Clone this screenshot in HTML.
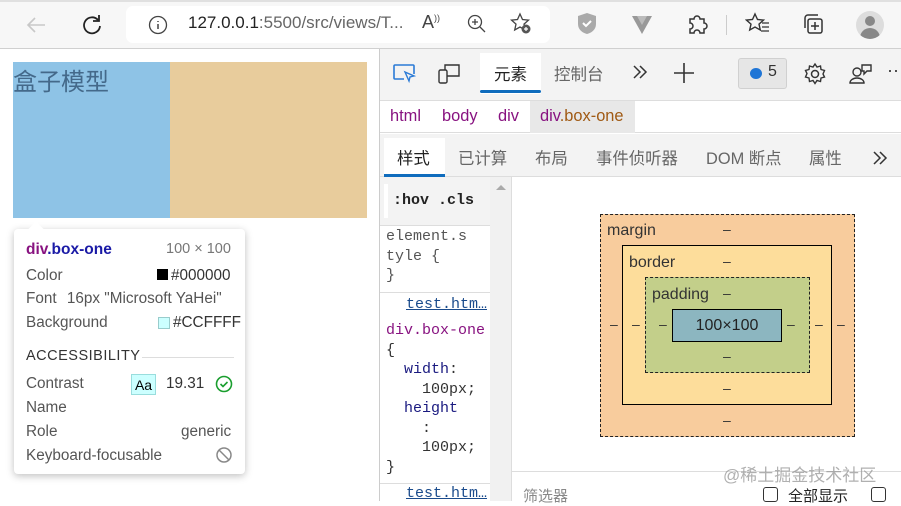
<!DOCTYPE html>
<html><head><meta charset="utf-8"><style>
*{margin:0;padding:0;box-sizing:border-box}
body{width:901px;height:501px;overflow:hidden;position:relative;background:#fff;font-family:"Liberation Sans","Noto Sans CJK SC",sans-serif;color:#333}
.a{position:absolute;white-space:nowrap}
.mono{font-family:"Liberation Mono","Noto Sans CJK SC",monospace}
.tt{font-size:15.3px;color:#555}
.st{font-size:16.4px;color:#666;top:145px}
</style></head><body>
<!-- toolbar -->
<div class="a" style="left:0;top:0;width:901px;height:49px;background:#f7f7f7;border-bottom:1px solid #d0d0d0"></div>
<div class="a" style="left:0;top:0;width:901px;height:2px;background:#e0e0e0"></div>
<svg class="a" style="left:24px;top:14px" width="24" height="22"><path d="M21 11H4M11 4L4 11l7 7" stroke="#c8c8c8" stroke-width="1.6" fill="none"/></svg>
<svg class="a" style="left:80px;top:13px" width="24" height="24"><path d="M18 7A8 8 0 1 0 20 13" stroke="#222" stroke-width="1.8" fill="none"/><path d="M19 2v6h-6" stroke="#222" stroke-width="1.8" fill="none"/></svg>
<div class="a" style="left:126px;top:6px;width:424px;height:37px;background:#fff;border-radius:7px"></div>
<svg class="a" style="left:148px;top:15px" width="20" height="20"><circle cx="10" cy="10" r="8.5" stroke="#444" stroke-width="1.3" fill="none"/><path d="M10 9v5M10 6v1" stroke="#444" stroke-width="1.5"/></svg>
<div class="a" style="left:188px;top:13px;font-size:17px;color:#222">127.0.0.1<span style="color:#666">:5500/src/views/T...</span></div>
<div class="a" style="left:422px;top:12px;font-size:18px;color:#444">A<sup style="font-size:9px">))</sup></div>
<svg class="a" style="left:466px;top:13px" width="22" height="22"><circle cx="9" cy="9" r="6.5" stroke="#444" stroke-width="1.3" fill="none"/><path d="M9 6v6M6 9h6M14 14l5 5" stroke="#444" stroke-width="1.3"/></svg>
<svg class="a" style="left:510px;top:12px" width="24" height="24"><path d="M10 2l2.5 5.5 6 .6-4.5 4 1.3 5.9L10 15l-5.3 3 1.3-5.9-4.5-4 6-.6z" stroke="#444" stroke-width="1.3" fill="none"/><circle cx="16" cy="17" r="4.5" fill="#555"/><path d="M16 15v4M14 17h4" stroke="#fff" stroke-width="1.2"/></svg>
<svg class="a" style="left:576px;top:12px" width="22" height="24"><path d="M11 1l9 3v8c0 6-5 9-9 10-4-1-9-4-9-10V4z" fill="#aaa"/><path d="M7 11l3 3 5-5" stroke="#fff" stroke-width="2" fill="none"/></svg>
<svg class="a" style="left:631px;top:15px" width="22" height="20"><path d="M1 1h20L11 19z" fill="#999"/><path d="M6 1h10l-5 9z" fill="#bbb"/></svg>
<svg class="a" style="left:685px;top:12px" width="24" height="24"><path d="M5 7h4a3 3 0 0 1 6 0h4v4a3 3 0 0 1 0 6v4h-4a3 3 0 0 0-6 0H5v-4a3 3 0 0 0 0-6z" stroke="#333" stroke-width="1.5" fill="none"/></svg>
<div class="a" style="left:726px;top:15px;width:1px;height:20px;background:#ccc"></div>
<svg class="a" style="left:745px;top:12px" width="26" height="24"><path d="M10 2l2.5 5.5 6 .6-4.5 4 1.3 5.9L10 15l-5.3 3 1.3-5.9-4.5-4 6-.6z" stroke="#333" stroke-width="1.4" fill="none"/><path d="M17 11h7M17 15h7M16 19h8" stroke="#333" stroke-width="1.3"/></svg>
<svg class="a" style="left:801px;top:12px" width="24" height="24"><rect x="7" y="7" width="14" height="14" rx="2" stroke="#333" stroke-width="1.5" fill="none"/><path d="M4 16V6a3 3 0 0 1 3-3h10" stroke="#333" stroke-width="1.5" fill="none"/><path d="M14 10v8M10 14h8" stroke="#333" stroke-width="1.5"/></svg>
<div class="a" style="left:856px;top:11px;width:28px;height:28px;border-radius:50%;background:#ddd;overflow:hidden"><div class="a" style="left:9px;top:5px;width:10px;height:10px;border-radius:50%;background:#888"></div><div class="a" style="left:4px;top:17px;width:20px;height:14px;border-radius:10px 10px 0 0;background:#888"></div></div>

<!-- page -->
<div class="a" style="left:13px;top:62px;width:157px;height:156px;background:#8ec3e6"></div>
<div class="a" style="left:170px;top:62px;width:197px;height:156px;background:#e8cc9c"></div>
<div class="a" style="left:13px;top:64px;font-size:24px;color:#44698a;font-family:'Noto Sans CJK SC',sans-serif;line-height:32px">盒子模型</div>

<!-- tooltip -->
<div class="a" style="left:14px;top:229px;width:231px;height:245px;background:#fff;border-radius:4px;box-shadow:0 2px 8px rgba(0,0,0,.25)"></div>
<div class="a" style="left:30px;top:224px;width:12px;height:12px;background:#fff;transform:rotate(45deg)"></div>
<div class="a" style="left:26px;top:240px;font-size:15.5px;line-height:20px;font-weight:bold;color:#881280">div<span style="color:#1a1aa6">.box-one</span></div>
<div class="a" style="left:166px;top:241px;font-size:14.5px;color:#777">100 × 100</div>
<div class="a tt" style="left:26px;top:267px">Color</div>
<div class="a" style="left:157px;top:269px;width:11px;height:11px;background:#000"></div>
<div class="a tt" style="left:171px;top:267px;color:#333">#000000</div>
<div class="a tt" style="left:26px;top:290px">Font <span style="margin-left:6px">16px "Microsoft YaHei"</span></div>
<div class="a tt" style="left:26px;top:314px">Background</div>
<div class="a" style="left:158px;top:317px;width:12px;height:12px;background:#ccffff;border:1px solid #9cc"></div>
<div class="a tt" style="left:173px;top:314px;color:#333">#CCFFFF</div>
<div class="a" style="left:26px;top:348px;font-size:14.5px;color:#333;letter-spacing:.5px">ACCESSIBILITY</div>
<div class="a" style="left:142px;top:357px;width:92px;height:1px;background:#ddd"></div>
<div class="a tt" style="left:26px;top:375px">Contrast</div>
<div class="a" style="left:131px;top:374px;width:25px;height:21px;background:#ccffff;border:1px solid #9dd;font-size:14px;color:#000;text-align:center;line-height:20px">Aa</div>
<div class="a tt" style="left:166px;top:375px;color:#333">19.31</div>
<svg class="a" style="left:215px;top:375px" width="18" height="18"><circle cx="9" cy="9" r="7.5" stroke="#1a9e2e" stroke-width="1.6" fill="none"/><path d="M5.5 9l2.5 2.5 4.5-4.5" stroke="#1a9e2e" stroke-width="1.6" fill="none"/></svg>
<div class="a tt" style="left:26px;top:399px">Name</div>
<div class="a tt" style="left:26px;top:423px">Role</div>
<div class="a tt" style="left:181px;top:423px">generic</div>
<div class="a tt" style="left:26px;top:447px">Keyboard-focusable</div>
<svg class="a" style="left:215px;top:446px" width="18" height="18"><circle cx="9" cy="9" r="7" stroke="#888" stroke-width="1.5" fill="none"/><path d="M4 4l10 10" stroke="#888" stroke-width="1.5"/></svg>

<!-- devtools -->
<div class="a" style="left:379px;top:49px;width:1px;height:452px;background:#ccc"></div>
<div class="a" style="left:380px;top:49px;width:521px;height:52px;background:#f3f3f3;border-bottom:1px solid #ddd"></div>
<svg class="a" style="left:392px;top:63px" width="26" height="22"><path d="M12 16H3a1 1 0 0 1-1-1V3a1 1 0 0 1 1-1h18a1 1 0 0 1 1 1v8" stroke="#2b7bd6" stroke-width="1.6" fill="none"/><path d="M13 9l9 4-4 1-1 4z" stroke="#2b7bd6" stroke-width="1.4" fill="none"/></svg>
<svg class="a" style="left:437px;top:62px" width="26" height="24"><rect x="2" y="8" width="8" height="13" rx="1.5" stroke="#333" stroke-width="1.4" fill="none"/><path d="M10 14h12V3H8v5" stroke="#333" stroke-width="1.4" fill="none"/></svg>
<div class="a" style="left:480px;top:53px;width:61px;height:41px;background:#fff"></div>
<div class="a" style="left:480px;top:90px;width:61px;height:3px;background:#0f6cbd;border-radius:2px"></div>
<div class="a" style="left:494px;top:61px;font-size:16.5px;color:#222">元素</div>
<div class="a" style="left:554px;top:61px;font-size:16.5px;color:#666">控制台</div>
<svg class="a" style="left:632px;top:64px" width="16" height="16"><path d="M2 2l6 6-6 6M8 2l6 6-6 6" stroke="#333" stroke-width="1.5" fill="none"/></svg>
<svg class="a" style="left:673px;top:62px" width="22" height="22"><path d="M11 1v20M1 11h20" stroke="#333" stroke-width="1.6"/></svg>
<div class="a" style="left:738px;top:58px;width:49px;height:31px;background:#e6e6e6;border:1px solid #d0d0d0;border-radius:3px"></div>
<div class="a" style="left:750px;top:68px;width:12px;height:11px;border-radius:50%;background:#1f75d6"></div>
<div class="a" style="left:768px;top:63px;font-size:16px;color:#333">5</div>
<svg class="a" style="left:803px;top:62px" width="24" height="24"><circle cx="12" cy="12" r="3.5" stroke="#333" stroke-width="1.5" fill="none"/><path d="M12 2l2 3 3.5-1 .5 3.5 3.5 1-1.5 3.5 1.5 3-3.5 1-.5 3.5-3.5-1-2 3-2-3-3.5 1-.5-3.5-3.5-1 1.5-3.5-1.5-3 3.5-1 .5-3.5 3.5 1z" stroke="#333" stroke-width="1.4" fill="none"/></svg>
<svg class="a" style="left:848px;top:62px" width="26" height="24"><circle cx="9" cy="10" r="4" stroke="#333" stroke-width="1.4" fill="none"/><path d="M2 21a7 5 0 0 1 14 0z" stroke="#333" stroke-width="1.4" fill="none"/><path d="M14 3h9v6h-4l-3 3V9h-2z" stroke="#333" stroke-width="1.4" fill="none"/></svg>
<div class="a" style="left:887px;top:60px;font-size:18px;color:#333">··</div>

<div class="a" style="left:380px;top:101px;width:521px;height:32px;background:#fff;border-bottom:1px solid #ddd"></div>
<div class="a" style="left:530px;top:101px;width:105px;height:32px;background:#e8e8e8"></div>
<div class="a" style="left:390px;top:107px;font-size:16.4px;color:#881280">html</div>
<div class="a" style="left:442px;top:107px;font-size:16.4px;color:#881280">body</div>
<div class="a" style="left:498px;top:107px;font-size:16.4px;color:#881280">div</div>
<div class="a" style="left:540px;top:107px;font-size:16.4px;color:#881280">div<span style="color:#a05a14">.box-one</span></div>

<div class="a" style="left:380px;top:134px;width:521px;height:43px;background:#f3f3f3;border-bottom:1px solid #ddd"></div>
<div class="a" style="left:384px;top:138px;width:61px;height:38px;background:#fff"></div>
<div class="a" style="left:384px;top:174px;width:61px;height:3px;background:#0f6cbd"></div>
<div class="a st" style="left:397px;color:#222">样式</div>
<div class="a st" style="left:458px">已计算</div>
<div class="a st" style="left:535px">布局</div>
<div class="a st" style="left:596px">事件侦听器</div>
<div class="a st" style="left:706px">DOM 断点</div>
<div class="a st" style="left:809px">属性</div>
<svg class="a" style="left:872px;top:150px" width="16" height="16"><path d="M2 2l6 6-6 6M8 2l6 6-6 6" stroke="#333" stroke-width="1.5" fill="none"/></svg>

<!-- styles column -->
<div class="a" style="left:380px;top:177px;width:110px;height:324px;background:#fff"></div>
<div class="a" style="left:380px;top:177px;width:110px;height:48px;background:#f3f3f3"></div>
<div class="a" style="left:384px;top:184px;width:4px;height:34px;background:#fff"></div>
<div class="a mono" style="left:393px;top:192px;font-size:15px;font-weight:bold;color:#222">:hov  .cls</div>
<div class="a" style="left:380px;top:225px;width:110px;height:1px;background:#ddd"></div>
<div class="a mono" style="left:386px;top:227px;font-size:15px;line-height:19.5px;color:#555">element.s<br>tyle {<br>}</div>
<div class="a" style="left:380px;top:292px;width:110px;height:1px;background:#ddd"></div>
<div class="a mono" style="left:406px;top:296px;font-size:15px;color:#1a4b8c;text-decoration:underline">test.htm…</div>
<div class="a mono" style="left:386px;top:321px;font-size:15px;line-height:19.5px;color:#333;white-space:pre"><span style="color:#881280">div.box-one</span>
{
  <span style="color:#1a1a80">width</span>:
    100px;
  <span style="color:#1a1a80">height</span>
    :
    100px;
}</div>
<div class="a" style="left:380px;top:483px;width:110px;height:1px;background:#ddd"></div>
<div class="a mono" style="left:406px;top:485px;font-size:15px;color:#1a4b8c;text-decoration:underline">test.htm…</div>
<div class="a" style="left:490px;top:177px;width:22px;height:324px;background:#f1f1f1;border-right:1px solid #ddd"></div>
<div class="a" style="left:496px;top:185px;width:0;height:0;border-left:5px solid transparent;border-right:5px solid transparent;border-bottom:5px solid #aaa"></div>

<!-- box model -->
<div class="a" style="left:600px;top:214px;width:255px;height:223px;background:#f8cc9d;border:1px dashed #222"></div>
<div class="a" style="left:622px;top:245px;width:210px;height:160px;background:#fddd9b;border:1px solid #000"></div>
<div class="a" style="left:645px;top:277px;width:165px;height:96px;background:#c3cf8a;border:1px dashed #222"></div>
<div class="a" style="left:672px;top:309px;width:110px;height:33px;background:#8cb6c0;border:1px solid #000;text-align:center;font-size:16px;line-height:31px;color:#222">100×100</div>
<div class="a" style="left:607px;top:222px;font-size:16px;color:#333">margin</div>
<div class="a" style="left:629px;top:254px;font-size:16px;color:#333">border</div>
<div class="a" style="left:652px;top:286px;font-size:16px;color:#333">padding</div>
<div class="a" style="font-size:14px;color:#333;left:723px;top:221px">–</div>
<div class="a" style="font-size:14px;color:#333;left:723px;top:253px">–</div>
<div class="a" style="font-size:14px;color:#333;left:723px;top:285px">–</div>
<div class="a" style="font-size:14px;color:#333;left:723px;top:348px">–</div>
<div class="a" style="font-size:14px;color:#333;left:723px;top:380px">–</div>
<div class="a" style="font-size:14px;color:#333;left:723px;top:412px">–</div>
<div class="a" style="font-size:14px;color:#333;left:610px;top:316px">–</div>
<div class="a" style="font-size:14px;color:#333;left:632px;top:316px">–</div>
<div class="a" style="font-size:14px;color:#333;left:659px;top:316px">–</div>
<div class="a" style="font-size:14px;color:#333;left:787px;top:316px">–</div>
<div class="a" style="font-size:14px;color:#333;left:815px;top:316px">–</div>
<div class="a" style="font-size:14px;color:#333;left:837px;top:316px">–</div>

<div class="a" style="left:512px;top:471px;width:389px;height:1px;background:#ddd"></div>
<div class="a" style="left:523px;top:485px;font-size:15px;color:#888">筛选器</div>
<div class="a" style="left:763px;top:487px;width:15px;height:15px;border:1px solid #333;border-radius:3px"></div>
<div class="a" style="left:788px;top:485px;font-size:15px;color:#222">全部显示</div>
<div class="a" style="left:871px;top:487px;width:15px;height:15px;border:1px solid #333;border-radius:3px"></div>
<div class="a" style="left:723px;top:461px;font-size:17px;color:rgba(150,150,150,.75)">@稀土掘金技术社区</div>
</body></html>
